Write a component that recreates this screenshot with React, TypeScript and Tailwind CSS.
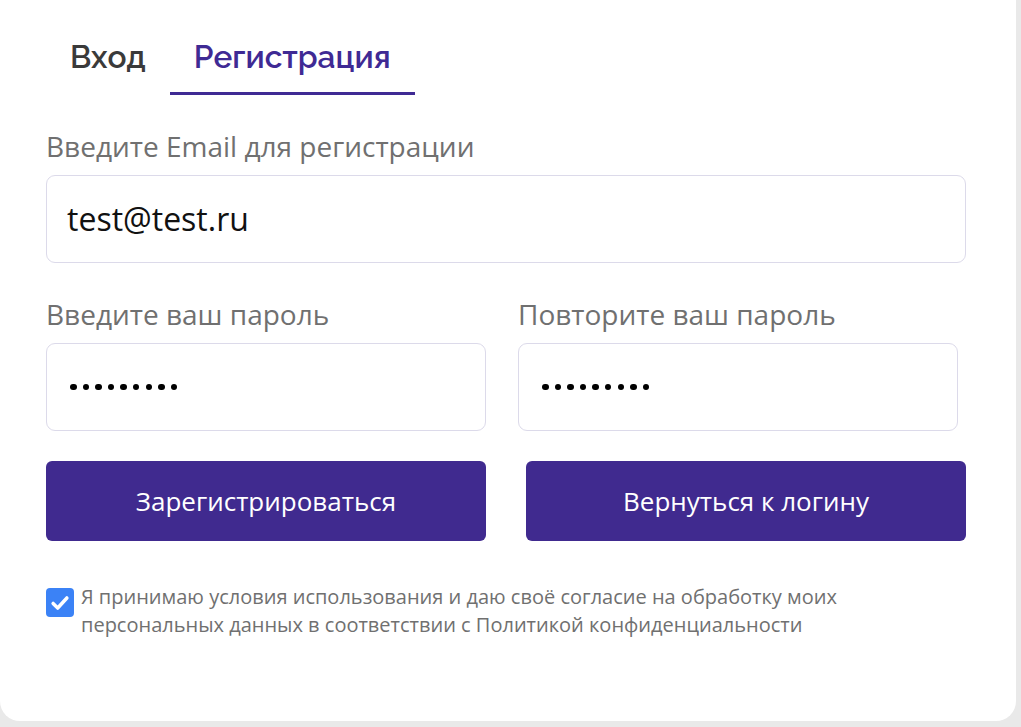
import React from "react";

export default function App() {
  return (
    <div className="min-h-[727px] w-[1021px] bg-[#e9e9e9] overflow-hidden">
      <div className="w-[1016px] h-[721px] bg-white rounded-b-[20px] pt-[36px] px-[46px] font-['Open_Sans',sans-serif]">
        {/* Tabs */}
        <div className="flex">
          <button className="px-[24px] pb-[15px] leading-[41px] text-[31.6px] font-semibold text-[#3a3a3a] border-b-[3px] border-transparent font-['Raleway','Inter',sans-serif]">
            Вход
          </button>
          <button className="px-[24px] pb-[15px] leading-[41px] text-[31.6px] font-semibold text-[#3f2a94] border-b-[3px] border-[#3f2a94] font-['Raleway','Inter',sans-serif]">
            Регистрация
          </button>
        </div>

        {/* Email */}
        <div className="mt-[32px] text-[28px] leading-[38px] text-[#707070]">
          Введите Email для регистрации
        </div>
        <div className="mt-[10px] h-[88px] w-[920px] rounded-[9px] border border-[#dcdaea] flex items-center px-[20px] text-[32px] text-[#111]">
          test@test.ru
        </div>

        {/* Passwords */}
        <div className="mt-[32px] flex gap-[32px]">
          <div className="w-[440px]">
            <div className="text-[28px] leading-[38px] text-[#707070]">Введите ваш пароль</div>
            <div className="mt-[10px] h-[88px] rounded-[9px] border border-[#dcdaea] flex items-center px-[21px]">
              <Dots />
            </div>
          </div>
          <div className="w-[440px]">
            <div className="text-[28px] leading-[38px] text-[#707070]">Повторите ваш пароль</div>
            <div className="mt-[10px] h-[88px] rounded-[9px] border border-[#dcdaea] flex items-center px-[21px]">
              <Dots />
            </div>
          </div>
        </div>

        {/* Buttons */}
        <div className="mt-[30px] flex gap-[40px]">
          <button className="w-[440px] h-[80px] rounded-[6px] bg-[#402a8f] text-white text-[26px] font-['Open_Sans',sans-serif]">
            Зарегистрироваться
          </button>
          <button className="w-[440px] h-[80px] rounded-[6px] bg-[#402a8f] text-white text-[26px] font-['Open_Sans',sans-serif]">
            Вернуться к логину
          </button>
        </div>

        {/* Agreement */}
        <div className="mt-[42px] flex items-start gap-[7px]">
          <div className="mt-[5px] w-[28px] h-[29px] shrink-0 rounded-[4px] bg-[#3b82f6] flex items-center justify-center">
            <svg width="22" height="22" viewBox="0 0 24 24" fill="none">
              <path d="M4.5 12.5l5 5L19.5 6.5" stroke="white" strokeWidth="3.8" strokeLinecap="round" strokeLinejoin="round" />
            </svg>
          </div>
          <div className="text-[20px] leading-[28px] text-[#707070] w-[820px]">
            Я принимаю условия использования и даю своё согласие на обработку моих
            <br />
            персональных данных в соответствии с Политикой конфиденциальности
          </div>
        </div>
      </div>
    </div>
  );
}

function Dots() {
  return (
    <div className="flex gap-[6.1px] ml-[2px]">
      {Array.from({ length: 9 }).map((_, i) => (
        <span key={i} className="block w-[6.5px] h-[6.5px] rounded-full bg-black" />
      ))}
    </div>
  );
}
